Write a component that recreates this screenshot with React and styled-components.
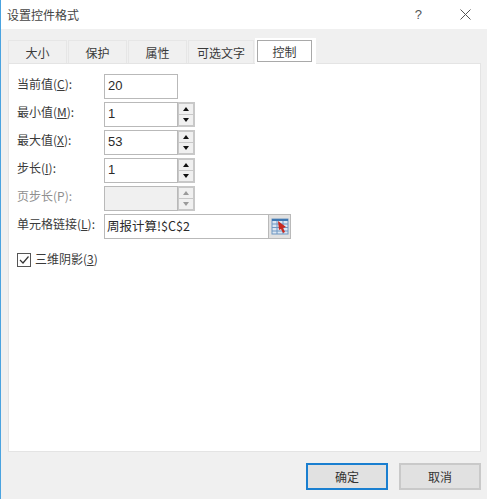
import styled, { createGlobalStyle } from 'styled-components';

const GlobalStyle = createGlobalStyle`
  html, body { margin: 0; padding: 0; background: #fff; }
  body { font-family: "Noto Sans CJK SC", "Liberation Sans", sans-serif; font-size: 12px; color: #3a3a3a; }
`

const Dialog = styled.div`
  width: 487px;
  height: 499px;
  display: flex;
  flex-direction: column;
  border-left: 1px solid #4aa3e0;
  box-sizing: border-box;
  overflow: hidden;
`

const TitleBar = styled.header`
  height: 29px;
  flex: none;
  background: #fff;
  display: flex;
  align-items: center;
  padding: 0 16px 0 7px;
  font-size: 12px;
  color: #444;
`

const Title = styled.span`
  flex: 1;
  margin-left: -1px;
`

const HelpMark = styled.span`
  font-family: "Liberation Sans", sans-serif;
  font-size: 13px;
  color: #555;
  margin-right: 38px;
`

const Body = styled.main`
  flex: 1;
  background: #f0f0f0;
  display: flex;
  flex-direction: column;
  padding: 8px 6px 9px 7px;
`

const Tabs = styled.nav`
  display: flex;
  align-items: flex-end;
  height: 26px;
  flex: none;
`

const Tab = styled.div`
  width: ${p => p.$w}px;
  height: 23px;
  margin-right: 1px;
  background: #f0f0f0;
  border: 1px solid #e6e6e6;
  border-bottom: 0;
  box-sizing: border-box;
  display: flex;
  align-items: center;
  justify-content: center;
`

const ActiveTab = styled.div`
  width: 61px;
  height: 26px;
  background: #fff;
  box-sizing: border-box;
  padding: 2px 4px 2px 2px;
  position: relative;
  z-index: 1;
  margin-bottom: -1px;
`

const ActiveTabInner = styled.div`
  height: 100%;
  border: 1px solid #a9a9a9;
  box-sizing: border-box;
  display: flex;
  align-items: center;
  justify-content: center;
`

const Panel = styled.section`
  flex: 1;
  background: #fff;
  border: 1px solid #e4e4e4;
  padding: 10px 0 0 8px;
  display: flex;
  flex-direction: column;
`

const Row = styled.div`
  display: flex;
  align-items: center;
  height: 25px;
  margin-bottom: 3px;
`

const Label = styled.label`
  width: 87px;
  flex: none;
  position: relative;
  top: -3px;
  color: ${p => (p.$disabled ? '#8f8f8f' : '#3a3a3a')};
`

const Under = styled.span`
  text-decoration: underline;
  text-underline-offset: 1px;
`

const Field = styled.div`
  width: ${p => p.$w}px;
  height: 25px;
  box-sizing: border-box;
  border: 1px solid #b9b9b9;
  background: ${p => (p.$disabled ? '#f0f0f0' : '#fff')};
  display: flex;
  align-items: center;
  padding: 0 0 2px 3px;
  font-size: 13px;
  font-family: "Liberation Sans", "Noto Sans CJK SC", sans-serif;
  color: #2a2a2a;
`

const LinkText = styled.span`
  font-family: "Noto Sans CJK SC", sans-serif;
  font-size: 12.5px;
  margin-left: -1px;
`

const Spinner = styled.div`
  width: 17px;
  height: 25px;
  box-sizing: border-box;
  border: 1px solid #c8c8c8;
  border-left: 0;
  background: #c8c8c8;
  display: flex;
  flex-direction: column;
  gap: 1px;
  padding: 1px 1px 1px 0;
`

const SpinButton = styled.div`
  flex: 1;
  background: #f0f0f0;
  display: flex;
  align-items: center;
  justify-content: center;
  margin-left: 1px;
`

const Arrow = styled.span`
  width: 0;
  height: 0;
  border-left: 3.5px solid transparent;
  border-right: 3.5px solid transparent;
  ${p => (p.$up ? 'border-bottom' : 'border-top')}: 4px solid ${p => (p.$disabled ? '#9a9a9a' : '#111')};
`

const PickerButton = styled.div`
  width: 22px;
  height: 25px;
  box-sizing: border-box;
  border: 1px solid #b9b9b9;
  border-left: 0;
  background: #e1e1e1;
  display: flex;
  align-items: center;
  justify-content: center;
`

const CheckRow = styled.div`
  display: flex;
  align-items: center;
  gap: 4px;
  margin-top: 9px;
`

const CheckBox = styled.div`
  width: 14px;
  height: 14px;
  box-sizing: border-box;
  border: 1px solid #555;
  background: #fff;
  display: flex;
  align-items: center;
  justify-content: center;
`

const CheckLabel = styled.span`
  position: relative;
  top: -1px;
`

const Footer = styled.footer`
  flex: none;
  display: flex;
  justify-content: flex-end;
  gap: 11px;
  padding-top: 11px;
`

const Button = styled.button`
  width: 82px;
  height: 27px;
  box-sizing: border-box;
  background: #e1e1e1;
  border: ${p => (p.$primary ? '2px solid #1a7fd0' : '2px solid #c9c9c9')};
  font: inherit;
  color: #333;
  padding: 0;
`

const CloseIcon = () => (
  <svg width="11" height="11" viewBox="0 0 11 11" fill="none" stroke="#555" strokeWidth="1">
    <path d="M0.5 0.5 L10.5 10.5 M10.5 0.5 L0.5 10.5" />
  </svg>
)

const PickerIcon = () => (
  <svg width="18" height="17" viewBox="0 0 18 17">
    <rect x="1" y="1" width="16" height="15" fill="#dbe6f2" stroke="#6f97c2" />
    <path d="M1 6H17M1 9.5H17M1 13H17M6 3V16M12 3V16" stroke="#6f97c2" />
    <rect x="1" y="1" width="16" height="2" fill="#3f78b2" />
    <path d="M7 3 L15 9 L12 10 L14 14 L12 15 L10 11 L8 12 Z" fill="#c8281e" />
  </svg>
)

const Spin = ({ disabled }) => (
  <Spinner>
    <SpinButton><Arrow $up $disabled={disabled} /></SpinButton>
    <SpinButton><Arrow $disabled={disabled} /></SpinButton>
  </Spinner>
)

const App = () => {
  return (
    <>
      <GlobalStyle />
      <Dialog>
        <TitleBar>
          <Title>设置控件格式</Title>
          <HelpMark>?</HelpMark>
          <CloseIcon />
        </TitleBar>
        <Body>
          <Tabs>
            <Tab $w={59}>大小</Tab>
            <Tab $w={59}>保护</Tab>
            <Tab $w={59}>属性</Tab>
            <Tab $w={66}>可选文字</Tab>
            <ActiveTab><ActiveTabInner>控制</ActiveTabInner></ActiveTab>
          </Tabs>
          <Panel>
            <Row>
              <Label>当前值(<Under>C</Under>):</Label>
              <Field $w={74}>20</Field>
            </Row>
            <Row>
              <Label>最小值(<Under>M</Under>):</Label>
              <Field $w={74}>1</Field>
              <Spin />
            </Row>
            <Row>
              <Label>最大值(<Under>X</Under>):</Label>
              <Field $w={74}>53</Field>
              <Spin />
            </Row>
            <Row>
              <Label>步长(<Under>I</Under>):</Label>
              <Field $w={74}>1</Field>
              <Spin />
            </Row>
            <Row>
              <Label $disabled>页步长(P):</Label>
              <Field $w={74} $disabled />
              <Spin disabled />
            </Row>
            <Row>
              <Label>单元格链接(<Under>L</Under>):</Label>
              <Field $w={165}><LinkText>周报计算!$C$2</LinkText></Field>
              <PickerButton><PickerIcon /></PickerButton>
            </Row>
            <CheckRow>
              <CheckBox>
                <svg width="12" height="12" viewBox="0 0 12 12" fill="none" stroke="#333" strokeWidth="1.2">
                  <path d="M2 6 L5 9 L10.5 2.5" />
                </svg>
              </CheckBox>
              <CheckLabel>三维阴影(<Under>3</Under>)</CheckLabel>
            </CheckRow>
          </Panel>
          <Footer>
            <Button $primary>确定</Button>
            <Button>取消</Button>
          </Footer>
        </Body>
      </Dialog>
    </>
  );
};

export default App;
